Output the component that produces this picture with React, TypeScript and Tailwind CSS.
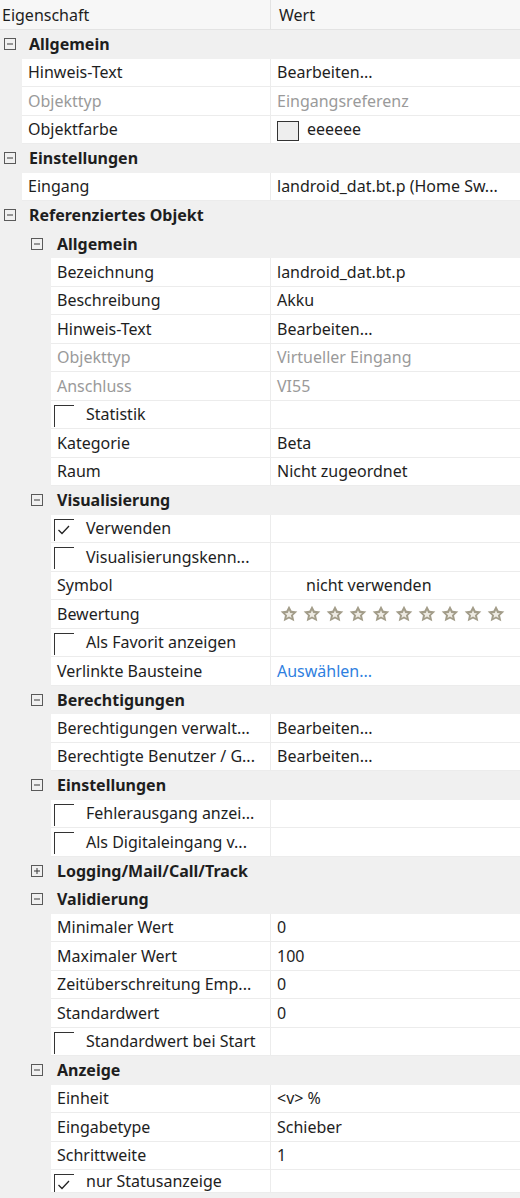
import React from 'react';

type Row =
  | { kind: 'sec'; level: 0 | 1; label: string; open?: boolean }
  | {
      kind: 'row';
      level: 1 | 2;
      label: string;
      value?: string;
      muted?: boolean;
      check?: boolean;
      link?: boolean;
      swatch?: boolean;
      stars?: boolean;
      pad?: boolean;
    };

const ROWS: Row[] = [
  { kind: 'sec', level: 0, label: 'Allgemein' },
  { kind: 'row', level: 1, label: 'Hinweis-Text', value: 'Bearbeiten...' },
  { kind: 'row', level: 1, label: 'Objekttyp', value: 'Eingangsreferenz', muted: true },
  { kind: 'row', level: 1, label: 'Objektfarbe', value: 'eeeeee', swatch: true },
  { kind: 'sec', level: 0, label: 'Einstellungen' },
  { kind: 'row', level: 1, label: 'Eingang', value: 'landroid_dat.bt.p (Home Sw...' },
  { kind: 'sec', level: 0, label: 'Referenziertes Objekt' },
  { kind: 'sec', level: 1, label: 'Allgemein' },
  { kind: 'row', level: 2, label: 'Bezeichnung', value: 'landroid_dat.bt.p' },
  { kind: 'row', level: 2, label: 'Beschreibung', value: 'Akku' },
  { kind: 'row', level: 2, label: 'Hinweis-Text', value: 'Bearbeiten...' },
  { kind: 'row', level: 2, label: 'Objekttyp', value: 'Virtueller Eingang', muted: true },
  { kind: 'row', level: 2, label: 'Anschluss', value: 'VI55', muted: true },
  { kind: 'row', level: 2, label: 'Statistik', check: false },
  { kind: 'row', level: 2, label: 'Kategorie', value: 'Beta' },
  { kind: 'row', level: 2, label: 'Raum', value: 'Nicht zugeordnet' },
  { kind: 'sec', level: 1, label: 'Visualisierung' },
  { kind: 'row', level: 2, label: 'Verwenden', check: true },
  { kind: 'row', level: 2, label: 'Visualisierungskenn...', check: false },
  { kind: 'row', level: 2, label: 'Symbol', value: 'nicht verwenden', pad: true },
  { kind: 'row', level: 2, label: 'Bewertung', stars: true },
  { kind: 'row', level: 2, label: 'Als Favorit anzeigen', check: false },
  { kind: 'row', level: 2, label: 'Verlinkte Bausteine', value: 'Auswählen...', link: true },
  { kind: 'sec', level: 1, label: 'Berechtigungen' },
  { kind: 'row', level: 2, label: 'Berechtigungen verwalt...', value: 'Bearbeiten...' },
  { kind: 'row', level: 2, label: 'Berechtigte Benutzer / G...', value: 'Bearbeiten...' },
  { kind: 'sec', level: 1, label: 'Einstellungen' },
  { kind: 'row', level: 2, label: 'Fehlerausgang anzei...', check: false },
  { kind: 'row', level: 2, label: 'Als Digitaleingang v...', check: false },
  { kind: 'sec', level: 1, label: 'Logging/Mail/Call/Track', open: false },
  { kind: 'sec', level: 1, label: 'Validierung' },
  { kind: 'row', level: 2, label: 'Minimaler Wert', value: '0' },
  { kind: 'row', level: 2, label: 'Maximaler Wert', value: '100' },
  { kind: 'row', level: 2, label: 'Zeitüberschreitung Emp...', value: '0' },
  { kind: 'row', level: 2, label: 'Standardwert', value: '0' },
  { kind: 'row', level: 2, label: 'Standardwert bei Start', check: false },
  { kind: 'sec', level: 1, label: 'Anzeige' },
  { kind: 'row', level: 2, label: 'Einheit', value: '<v> %' },
  { kind: 'row', level: 2, label: 'Eingabetype', value: 'Schieber' },
  { kind: 'row', level: 2, label: 'Schrittweite', value: '1' },
  { kind: 'row', level: 2, label: 'nur Statusanzeige', check: true },
];

function ExpandBox({ open = true }: { open?: boolean }) {
  return (
    <svg width="12" height="12" viewBox="0 0 12 12" className="shrink-0">
      <rect x="0.5" y="0.5" width="11" height="11" fill="none" stroke="#5a5a5a" />
      <line x1="3" y1="6" x2="9" y2="6" stroke="#3a3a3a" />
      {!open && <line x1="6" y1="3" x2="6" y2="9" stroke="#3a3a3a" />}
    </svg>
  );
}

function Star() {
  return (
    <svg width="18" height="18" viewBox="0 0 16 16">
      <path
        d="M8 0.6 L10.3 5.2 L15.4 5.8 L11.6 9.3 L12.7 14.5 L8 11.9 L3.3 14.5 L4.4 9.3 L0.6 5.8 L5.7 5.2 Z"
        fill="#a39d8a"
      />
      <path d="M8 4.6 L9.1 7 L11.6 7.3 L9.7 9 L10.3 11.6 L8 10.3 L5.7 11.6 L6.3 9 L4.4 7.3 L6.9 7 Z" fill="#eeebe3" />
    </svg>
  );
}

function CheckBox({ checked }: { checked: boolean }) {
  return (
    <div className="relative w-[20px] h-[22px] mt-[4px] self-start border-l border-t border-[#333] shrink-0">
      {checked && (
        <svg width="14" height="12" viewBox="0 0 14 12" className="absolute left-[2px] top-[4px]">
          <path d="M1.5 6 L5 9.5 L12 2" fill="none" stroke="#222" strokeWidth="1.3" />
        </svg>
      )}
    </div>
  );
}

function Value({ row }: { row: Extract<Row, { kind: 'row' }> }) {
  if (row.stars) {
    return (
      <div className="flex items-center gap-[5px] pl-[3px]">
        {Array.from({ length: 10 }).map((_, i) => (
          <Star key={i} />
        ))}
      </div>
    );
  }
  if (row.swatch) {
    return (
      <div className="flex items-center gap-[8px]">
        <div className="w-[22px] h-[20px] mt-[3px] self-start border border-[#333] bg-[#eeeeee] shrink-0" />
        <span>{row.value}</span>
      </div>
    );
  }
  if (row.value === undefined) return null;
  return (
    <span
      className={
        row.muted ? 'text-[#9a9a9a]' : row.link ? 'text-[#2f7fe0]' : row.pad ? 'pl-[29px]' : ''
      }
    >
      {row.value}
    </span>
  );
}

export default function App() {
  return (
    <div
      className="w-[520px] h-[1198px] overflow-hidden bg-[#f0f0f0] text-[16px] text-[#1e1e1e] leading-none"
      style={{ fontFamily: '"Noto Sans", "Open Sans", sans-serif' }}
    >
      {/* Header */}
      <div className="flex h-[30px] bg-[#f7f7f7] border-b border-[#e3e3e3]">
        <div className="w-[271px] pl-[2px] flex items-center border-r border-[#e3e3e3]">Eigenschaft</div>
        <div className="flex-1 pl-[8px] flex items-center">Wert</div>
      </div>

      {ROWS.map((row, i) => {
        const last = i === ROWS.length - 1;
        if (row.kind === 'sec') {
          return (
            <div
              key={i}
              className={`flex items-center h-[28.5px] font-bold ${row.level === 0 ? 'pl-[4px] gap-[13px]' : 'pl-[31px] gap-[14px]'}`}
            >
              <ExpandBox open={row.open !== false} />
              <span className="whitespace-nowrap">{row.label}</span>
            </div>
          );
        }
        const indent = row.level === 1 ? 'w-[22px]' : 'w-[51px]';
        const labelW = row.level === 1 ? 'w-[248px]' : 'w-[219px]';
        return (
          <div key={i} className={`flex ${last ? 'h-[23px]' : 'h-[28.5px]'}`}>
            <div className={`${indent} shrink-0`} />
            <div className="flex flex-1 bg-white border-b border-[#ececec]">
              <div
                className={`${labelW} shrink-0 flex items-center overflow-hidden whitespace-nowrap ${row.check !== undefined ? 'pl-[3px]' : 'pl-[6px]'} ${row.muted ? 'text-[#9a9a9a]' : ''}`}
              >
                {row.check !== undefined && <CheckBox checked={row.check} />}
                <span className={row.check !== undefined ? 'pl-[12px]' : ''}>{row.label}</span>
              </div>
              <div className="flex-1 flex items-center pl-[6px] border-l border-[#ececec] whitespace-nowrap overflow-hidden">
                <Value row={row} />
              </div>
            </div>
          </div>
        );
      })}
    </div>
  );
}
